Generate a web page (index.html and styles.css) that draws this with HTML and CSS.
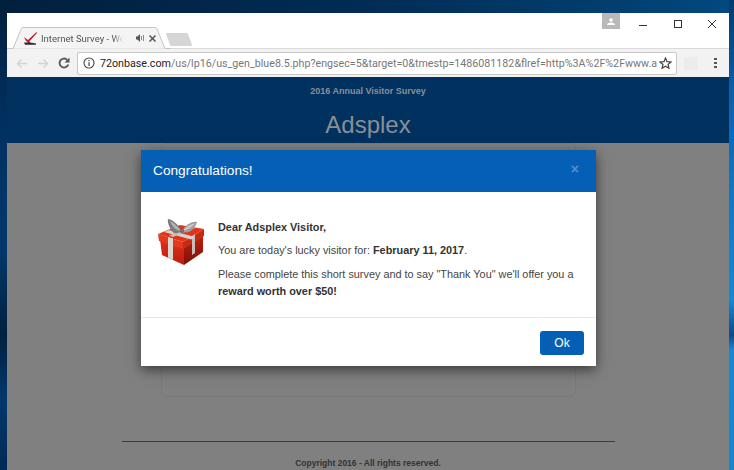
FILE: index.html
```html
<!DOCTYPE html>
<html lang="en">
<head>
    <meta charset="UTF-8">
    <meta name="viewport" content="width=device-width, initial-scale=1.0">
    <title>Internet Survey</title>
    <link rel="stylesheet" href="styles.css">
</head>
<body>
    <div class="desktop">
        <div class="window">
            <!-- Tab strip -->
            <div class="tabstrip">
                <div class="tab">
                    <svg class="tab-shape" width="158" height="22" viewBox="0 0 158 22">
                        <path d="M-6 21.500H0L8.500 1.500Q9 .5 10 .5H142Q143.500 .5 144 2L152 21.500H158" fill="#f4f4f4" stroke="#c4c4c4"/>
                    </svg>
                    <svg class="favicon" width="15" height="13" viewBox="0 0 15 13">
                        <path d="M1 5L5 8L13.500 0L14 1L5.500 10.500L3 9Z" fill="#c2202c"/>
                        <path d="M4 8L6 9L8 12H5Z" fill="#c2202c"/>
                        <path d="M1 10.500H7L13 11.500V12.800H2Z" fill="#2a2a2a"/>
                    </svg>
                    <span class="tab-title">Internet Survey - We</span>
                    <svg class="speaker" width="8" height="8" viewBox="0 0 8 8">
                        <path d="M0 2.500H1.500L4 0V8L1.500 5.500H0Z" fill="#555"/>
                        <path d="M5.500 2V6M7.500 1V7" stroke="#888"/>
                    </svg>
                    <svg class="tab-close" width="7" height="7" viewBox="0 0 7 7">
                        <path d="M.5 .5L6.500 6.500M6.500 .5L.5 6.500" stroke="#555" stroke-width="1.500"/>
                    </svg>
                </div>
                <div class="new-tab"></div>
                <div class="profile">
                    <svg width="8" height="7" viewBox="0 0 8 7">
                        <circle cx="4" cy="2" r="1.800" fill="#fff"/>
                        <path d="M0 7Q0 4.500 4 4.500T8 7Z" fill="#fff"/>
                    </svg>
                </div>
                <div class="win-buttons">
                    <svg width="10" height="10" viewBox="0 0 10 10"><path d="M1 6.500H9" stroke="#333"/></svg>
                    <svg width="10" height="10" viewBox="0 0 10 10"><rect x="1.500" y="1.500" width="7" height="7" fill="none" stroke="#333"/></svg>
                    <svg width="10" height="10" viewBox="0 0 10 10"><path d="M1 1L9 9M9 1L1 9" stroke="#333"/></svg>
                </div>
            </div>

            <!-- Toolbar -->
            <div class="toolbar">
                <svg class="nav-icon" width="12" height="11" viewBox="0 0 12 11"><path d="M11 5.500H1.500M5.500 1.500L1.500 5.500L5.500 9.500" fill="none" stroke="#d4d4d4" stroke-width="1.500"/></svg>
                <svg class="nav-icon" width="12" height="11" viewBox="0 0 12 11"><path d="M1 5.500H10.500M6.500 1.500L10.500 5.500L6.500 9.500" fill="none" stroke="#d4d4d4" stroke-width="1.500"/></svg>
                <svg class="nav-icon reload" width="12" height="12" viewBox="0 0 12 12"><path d="M10.300 7.500A4.500 4.500 0 1 1 9.200 2.800" fill="none" stroke="#555" stroke-width="1.800"/><path d="M11.500 .5V5.500H6.500Z" fill="#555"/></svg>
                <div class="omnibox">
                    <svg width="12" height="12" viewBox="0 0 12 12">
                        <circle cx="6" cy="6" r="5" fill="none" stroke="#444" stroke-width="1.100"/>
                        <path d="M6 5.200V9M6 3V4.300" stroke="#444" stroke-width="1.200"/>
                    </svg>
                    <div class="url"><span class="host">72onbase.com</span>/us/lp16/us_gen_blue8.5.php?engsec=5&amp;target=0&amp;tmestp=1486081182&amp;flref=http%3A%2F%2Fwww.a</div>
                    <svg width="13" height="12" viewBox="0 0 13 12"><path d="M6.500 1L8 4.700L12 5L9 7.500L10 11.300L6.500 9.200L3 11.300L4 7.500L1 5L5 4.700Z" fill="none" stroke="#444" stroke-width="1.200"/></svg>
                </div>
                <div class="ext-icon"></div>
                <div class="menu-dots"><i></i><i></i><i></i></div>
            </div>

            <!-- Page -->
            <div class="page">
                <header class="site-header">
                    <p class="survey-name">2016 Annual Visitor Survey</p>
                    <h1>Adsplex</h1>
                </header>
                <div class="site-body">
                    <div class="survey-card"></div>
                    <footer class="site-footer">
                        <p>Copyright 2016 - All rights reserved.</p>
                    </footer>
                </div>

                <div class="modal">
                    <div class="modal-header">
                        <h2>Congratulations!</h2>
                        <span class="modal-close">×</span>
                    </div>
                    <div class="modal-body">
                        <svg class="gift" width="48" height="50" viewBox="0 0 48 50">
                            <defs>
                                <linearGradient id="giftLeft" x1="0" y1="0" x2="0" y2="1">
                                    <stop offset="0" stop-color="#e2301a"/>
                                    <stop offset="1" stop-color="#bb1c0e"/>
                                </linearGradient>
                                <linearGradient id="giftRight" x1="0" y1="0" x2="0" y2="1">
                                    <stop offset="0" stop-color="#bc2210"/>
                                    <stop offset="1" stop-color="#7e0f06"/>
                                </linearGradient>
                            </defs>
                            <!-- box -->
                            <path d="M3 22L27 31V48L5 38Z" fill="url(#giftLeft)"/>
                            <path d="M27 31L46 19V35L27 48Z" fill="url(#giftRight)"/>
                            <!-- lid -->
                            <path d="M1 17L26 25V32L2 24Z" fill="#e23a1c"/>
                            <path d="M26 25L47 12V19L26 32Z" fill="#c62a14"/>
                            <path d="M1 17L23 8L47 12L26 25Z" fill="#e0341a"/>
                            <!-- ribbon -->
                            <path d="M11 20L16 21.600V43L11 40.600Z" fill="#dcd6d2"/>
                            <path d="M35 19L38 17V36L35 38Z" fill="#c8bcb8"/>
                            <path d="M7 15L34 22.500L38 20L12 13Z" fill="#d8d2ce"/>
                            <path d="M35 9.500L12 18.500L16 20L39 10.500Z" fill="#c6c0bc"/>
                            <!-- bow -->
                            <path d="M25 14C22 9 17 3 11 2C10 5 13 13 17 16C20 17 23 15 25 14Z" fill="#7c7c7c"/>
                            <path d="M13 4C17 6 21 10 24 14C20 14 15 10 13 4Z" fill="#b4b4b4"/>
                            <path d="M25 14C28 9 34 4 40 5C39 9 36 13 32 15C29 16 27 15 25 14Z" fill="#9c9c9c"/>
                            <path d="M25 14C28 11 33 7 38 6.500C35 10 31 13 25 14Z" fill="#c8c8c8"/>
                            <circle cx="25" cy="14" r="2.200" fill="#707070"/>
                        </svg>
                        <div class="modal-text">
                            <p class="greeting">Dear Adsplex Visitor,</p>
                            <p>You are today's lucky visitor for: <b>February 11, 2017</b>.</p>
                            <p>Please complete this short survey and to say "Thank You" we'll offer you a <b>reward worth over $50!</b></p>
                        </div>
                    </div>
                    <div class="modal-footer">
                        <button type="button">Ok</button>
                    </div>
                </div>
            </div>
        </div>
    </div>
</body>
</html>
```

FILE: styles.css
```css
html, body {
    margin: 0;
    padding: 0;
}

body {
    width: 734px;
    height: 470px;
    overflow: hidden;
    font-family: 'Liberation Sans', Arial, sans-serif;
}

.desktop {
    height: 470px;
    box-sizing: border-box;
    padding: 13px 5px 0 7px;
    background:
        linear-gradient(180deg, #013a6b 0, #0a5fae 90px, #0a78cc 190px, #0f8ade 300px, #0c4a8c 335px, #0f8ade 350px, #0f88d8 470px) right top / 5px 100% no-repeat,
        linear-gradient(180deg, #011f3c 0, #013060 120px, #01386c 250px, #01203f 335px, #01386c 400px, #012a55 470px) left top / 7px 100% no-repeat,
        linear-gradient(90deg, #01203c, #012c55 50%, #023f70 85%, #024a80);
}

.window {
    height: 457px;
    display: flex;
    flex-direction: column;
    background: #fff;
}

.tabstrip {
    height: 35px;
    flex: none;
    display: flex;
    align-items: flex-end;
    padding-left: 6px;
    background: #fff;
}

.tab {
    width: 156px;
    height: 22px;
    position: relative;
    display: flex;
    align-items: center;
    padding-left: 10px;
    box-sizing: border-box;
    margin-bottom: -1px;
    z-index: 1;
}

.tab-shape {
    position: absolute;
    left: 0;
    top: 0;
    overflow: visible;
}

.favicon, .speaker, .tab-close, .tab-title {
    position: relative;
    flex: none;
}

.tab-title {
    width: 82px;
    margin-left: 3px;
    white-space: nowrap;
    font-family: Roboto, sans-serif;
    font-size: 9.500px;
    color: #555;
    -webkit-mask-image: linear-gradient(90deg, #000 88%, transparent);
    mask-image: linear-gradient(90deg, #000 88%, transparent);
}

.speaker {
    margin-left: 13px;
}

.tab-close {
    margin-left: 5px;
}

.new-tab {
    width: 22px;
    height: 13px;
    margin: 0 0 2px -1px;
    background: #d6d6d6;
    transform: skewX(20deg);
    border-radius: 1px;
}

.profile {
    width: 18px;
    height: 16px;
    margin: 0 0 19px auto;
    background: #b9b9b9;
    display: flex;
    align-items: center;
    justify-content: center;
    align-self: flex-start;
}

.win-buttons {
    width: 109px;
    height: 22px;
    align-self: flex-start;
    display: flex;
    align-items: center;
    justify-content: space-between;
    padding: 0 12px 0 18px;
    box-sizing: border-box;
}

.toolbar {
    height: 29px;
    flex: none;
    box-sizing: border-box;
    display: flex;
    align-items: center;
    padding: 0 12px 0 9px;
    background: #f2f2f2;
    border-top: 1px solid #d9d9d9;
}

.nav-icon {
    margin-right: 9px;
    flex: none;
}

.reload {
    margin-right: 7px;
}

.omnibox {
    width: 600px;
    flex: none;
    height: 23px;
    box-sizing: border-box;
    display: flex;
    align-items: center;
    gap: 5px;
    padding: 0 4px 0 5px;
    background: #fff;
    border: 1px solid #c8c8c8;
    border-radius: 2px;
}

.omnibox svg {
    flex: none;
}

.url {
    flex: 1;
    min-width: 0;
    white-space: nowrap;
    font-family: Roboto, sans-serif;
    font-size: 10.700px;
    color: #777;
}

.host {
    color: #222;
}

.ext-icon {
    width: 14px;
    height: 13px;
    margin-left: 7px;
    background: #ececec;
}

.menu-dots {
    margin-left: auto;
    display: flex;
    flex-direction: column;
    gap: 2px;
}

.menu-dots i {
    width: 3px;
    height: 2px;
    background: #555;
}

.page {
    flex: 1;
    min-height: 0;
    display: flex;
    flex-direction: column;
    position: relative;
    background: #808080;
}

.site-header {
    height: 66px;
    flex: none;
    background: #00315f;
    text-align: center;
    color: #8a8f96;
}

.survey-name {
    margin: 0;
    padding-top: 9px;
    font-size: 9px;
    line-height: 10px;
    font-weight: bold;
}

.site-header h1 {
    margin: 15px 0 0;
    font-size: 24px;
    line-height: 28px;
    font-weight: normal;
}

.site-body {
    flex: 1;
    display: flex;
    flex-direction: column;
    align-items: center;
}

.survey-card {
    width: 415px;
    height: 254px;
    box-sizing: border-box;
    border: 1px solid #7a7a7a;
    border-radius: 5px;
    flex: none;
}

.site-footer {
    width: 493px;
    margin-top: 44px;
    border-top: 1px solid #3c3c3c;
    text-align: center;
}

.site-footer p {
    margin: 16px 0 0;
    font-size: 8.500px;
    line-height: 11px;
    font-weight: bold;
    color: #333;
}

.modal {
    position: absolute;
    left: 134px;
    top: 73px;
    width: 455px;
    height: 216px;
    display: flex;
    flex-direction: column;
    background: #fff;
    box-shadow: 0 4px 12px rgba(0, 0, 0, 0.55);
}

.modal-header {
    height: 41px;
    padding: 0 17px 1px 12px;
    flex: none;
    display: flex;
    align-items: center;
    justify-content: space-between;
    background: #0560b5;
}

.modal-header h2 {
    margin: 0;
    font-size: 13.700px;
    font-weight: normal;
    color: #fff;
}

.modal-close {
    font-size: 14px;
    line-height: 14px;
    margin-top: -3px;
    font-weight: bold;
    color: #4f8fcc;
}

.modal-body {
    height: 126px;
    flex: none;
    box-sizing: border-box;
    display: flex;
    padding: 25px 12px 0 16px;
    border-bottom: 1px solid #e8e8e8;
}

.gift {
    flex: none;
    margin-right: 13px;
}

.modal-text {
    font-size: 10.870px;
    line-height: 17px;
    color: #444;
}

.modal-text p {
    margin: 0 0 7px;
}

.modal-text b {
    color: #333;
}

.greeting {
    font-weight: bold;
    color: #333;
    margin-top: 2px !important;
    margin-bottom: 6px !important;
}

.modal-footer {
    flex: 1;
    display: flex;
    align-items: center;
    justify-content: flex-end;
    padding: 1px 12px 0 0;
}

.modal-footer button {
    width: 44px;
    height: 24px;
    padding: 0;
    border: none;
    border-radius: 3px;
    background: #0560b5;
    color: #fff;
    font-family: inherit;
    font-size: 12px;
}
```
